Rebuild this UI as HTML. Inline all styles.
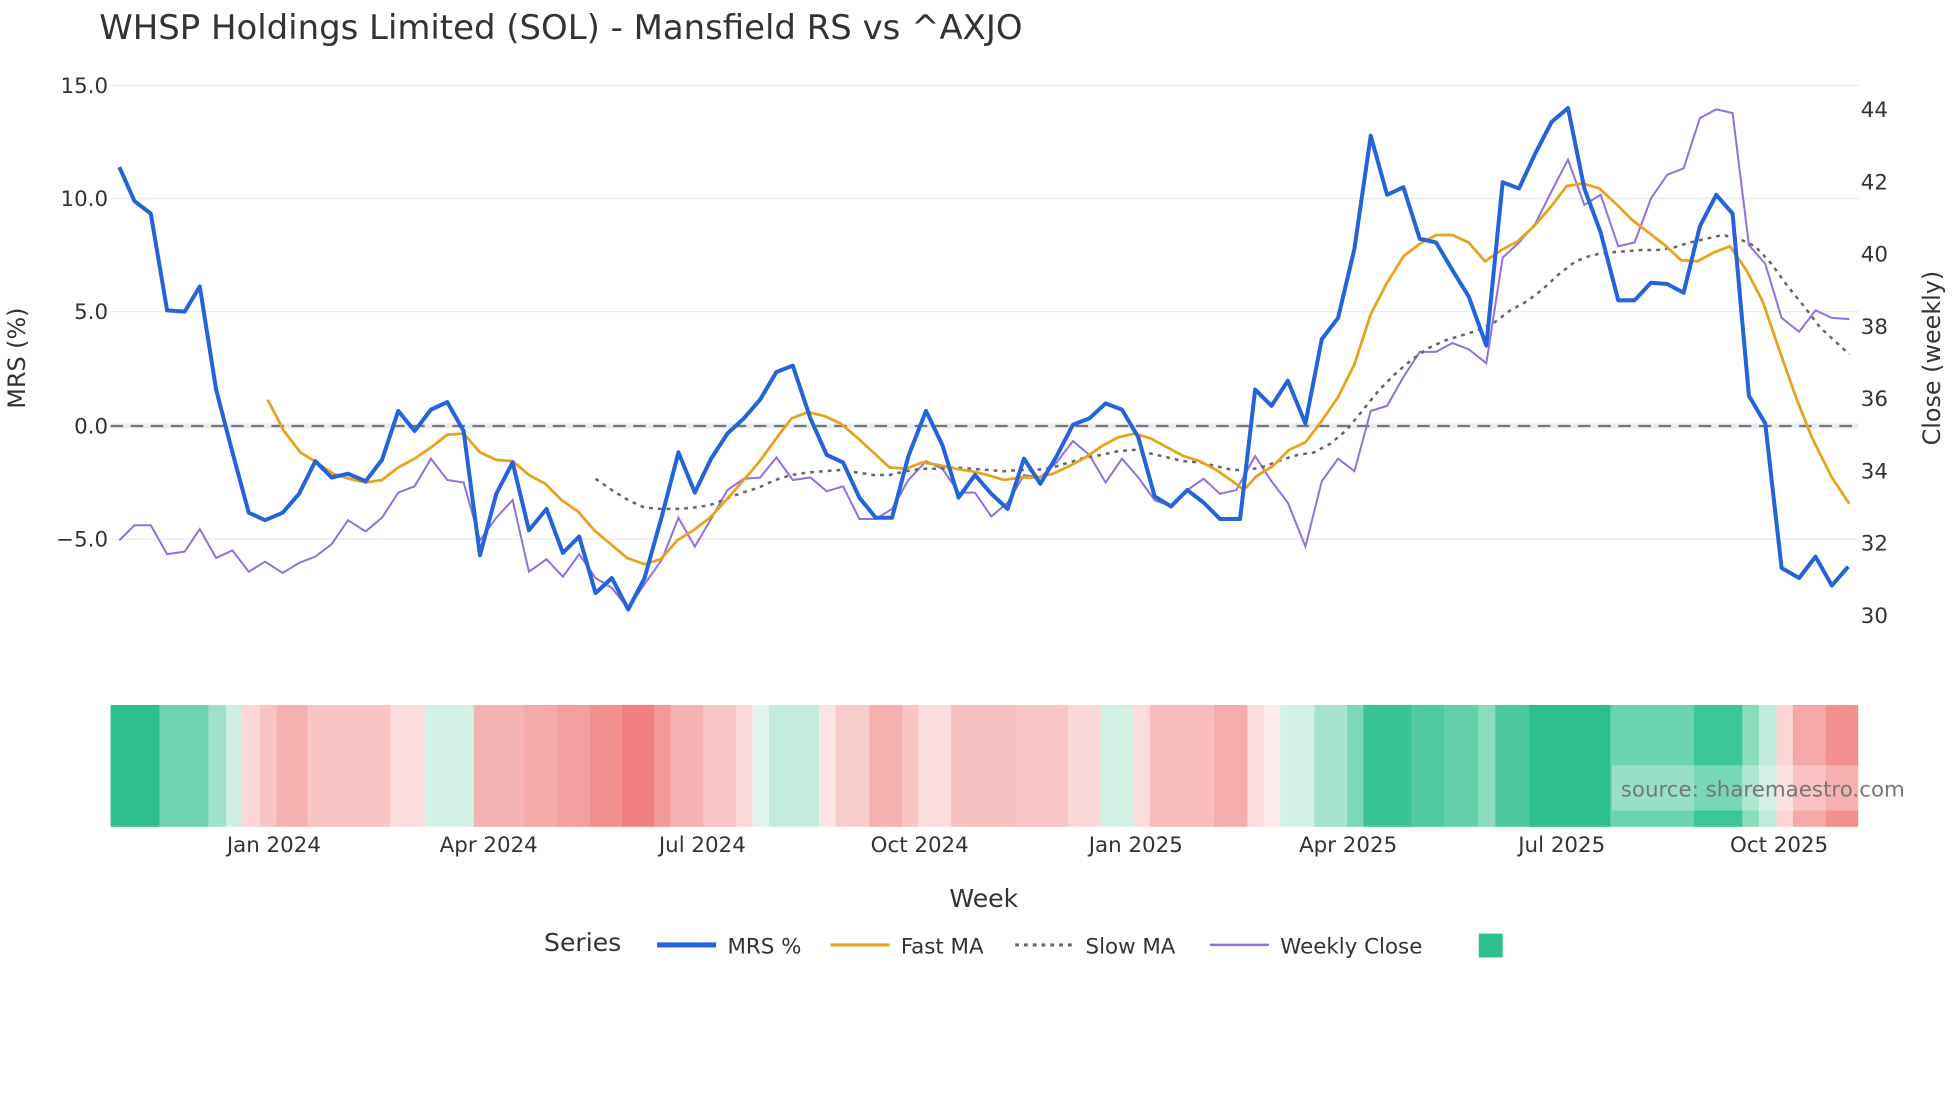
<!DOCTYPE html>
<html><head><meta charset="utf-8"><style>
html,body{margin:0;padding:0;background:#fff;}
svg{display:block;font-family:"DejaVu Sans","Liberation Sans",sans-serif;}
</style></head><body>
<svg width="1960" height="1102" viewBox="0 0 1560 877" preserveAspectRatio="none" xmlns="http://www.w3.org/2000/svg">
<rect width="1560" height="877" fill="#fff"/>
<text x="79" y="31" font-size="27" fill="#333">WHSP Holdings Limited (SOL) - Mansfield RS vs ^AXJO</text>
<g stroke="#e8ecf2" stroke-width="1">
<line x1="88" x2="1479" y1="68" y2="68"/><line x1="88" x2="1479" y1="158" y2="158"/>
<line x1="88" x2="1479" y1="248" y2="248"/><line x1="88" x2="1479" y1="429" y2="429"/>
</g>
<line x1="88" x2="1479" y1="339" y2="339" stroke="#e8ecf6" stroke-width="4"/>
<line x1="88" x2="1479" y1="339" y2="339" stroke="#777" stroke-width="1.8" stroke-dasharray="10,6"/>
<g font-size="17" fill="#333" text-anchor="end">
<text x="86" y="74">15.0</text><text x="86" y="164">10.0</text><text x="86" y="254">5.0</text><text x="86" y="345">0.0</text><text x="86" y="435">−5.0</text>
</g>
<g font-size="17" fill="#333">
<text x="1481" y="93">44</text><text x="1481" y="151">42</text><text x="1481" y="208">40</text><text x="1481" y="266">38</text><text x="1481" y="323">36</text><text x="1481" y="381">34</text><text x="1481" y="438">32</text><text x="1481" y="496">30</text>
</g>
<text transform="translate(20,285) rotate(-90)" font-size="19" fill="#333" text-anchor="middle">MRS (%)</text>
<text transform="translate(1544,285) rotate(-90)" font-size="19" fill="#333" text-anchor="middle">Close (weekly)</text>
<polyline fill="none" stroke="#9370db" stroke-width="1.6" points="95,430 107,418 120,418 133,441 147,439 159,421 172,444 185,438 198,455 211,447 225,456 238,448 251,443 264,433 277,414 291,423 304,412 317,392 330,387 343,365 356,382 369,384 382,430 395,412 408,398 421,455 435,445 448,459 461,441 474,460 487,468 500,484 513,465 527,445 540,412 553,435 566,413 579,390 592,381 605,380 618,364 631,382 645,380 658,391 671,387 684,413 697,413 710,405 723,382 737,367 750,373 763,392 776,392 789,411 802,400 815,378 828,380 841,368 854,351 867,362 880,384 893,365 906,380 919,398 932,403 945,390 958,381 971,393 984,390 999,363 1012,383 1025,400 1039,435 1052,383 1065,365 1078,375 1091,327 1104,323 1117,300 1130,280 1143,280 1156,273 1169,278 1183,289 1196,205 1209,193 1222,178 1235,152 1248,127 1261,163 1274,155 1288,196 1301,193 1314,158 1327,139 1340,134 1353,94 1366,87 1379,90 1392,195 1405,210 1418,253 1432,264 1445,247 1458,253 1472,254"/>
<polyline fill="none" stroke="#666" stroke-width="2" stroke-dasharray="3,4" points="474,381 487,390 500,398 513,404 526,405 539,405 552,404 565,402 578,397 591,392 604,388 617,382 630,378 643,376 656,375 669,374 682,376 695,378 708,378 721,375 734,373 747,373 760,372 773,373 786,374 799,375 812,374 825,374 838,372 851,368 864,364 877,362 890,359 903,358 916,361 929,364 942,367 955,368 968,371 981,374 994,374 1007,371 1020,366 1033,362 1046,360 1059,353 1072,342 1085,326 1098,310 1111,297 1124,286 1137,277 1150,271 1163,267 1176,263 1189,257 1202,247 1215,240 1228,230 1241,218 1254,208 1267,203 1280,201 1293,200 1306,199 1319,199 1332,197 1345,193 1358,190 1371,187 1384,190 1397,196 1410,210 1423,228 1436,244 1449,261 1472,282"/>
<polyline fill="none" stroke="#e8a21c" stroke-width="2.2" points="213,318 226,343 239,360 252,368 265,377 278,381 291,384 304,382 317,372 330,365 343,356 356,346 369,345 382,360 395,366 408,367 421,378 434,385 447,398 460,407 473,422 486,433 499,444 513,449 526,445 539,430 552,422 565,412 578,398 591,383 604,368 617,350 630,333 643,328 656,331 669,337 682,348 695,360 708,372 721,373 734,368 747,370 760,373 773,375 786,378 799,382 812,380 825,380 838,377 851,371 864,364 877,355 890,348 903,345 916,349 929,356 942,363 955,367 968,374 981,383 990,390 1000,379 1013,371 1026,358 1039,352 1052,335 1065,316 1078,290 1091,250 1104,225 1117,204 1130,194 1143,187 1156,187 1169,193 1182,208 1195,199 1208,192 1221,180 1234,165 1247,148 1260,146 1273,150 1286,162 1299,175 1312,185 1325,195 1338,207 1351,208 1364,201 1377,196 1390,215 1403,240 1416,278 1429,315 1442,348 1458,380 1472,401"/>
<polyline fill="none" stroke="#2563d9" stroke-width="3.2" stroke-linejoin="round" points="95,133 107,160 120,170 133,247 147,248 159,228 172,310 185,360 198,408 211,414 225,408 238,393 251,367 264,380 277,377 291,383 304,366 317,327 330,343 343,326 356,320 369,343 382,442 395,393 408,368 421,422 435,405 448,440 461,427 474,472 487,460 500,485 513,460 527,410 540,360 553,392 566,365 579,345 592,333 605,318 618,296 631,291 645,333 658,362 671,368 684,396 697,412 710,412 723,363 737,327 750,354 763,396 776,378 789,393 802,405 815,365 828,385 841,363 854,338 867,333 880,321 893,326 906,348 919,395 932,403 945,390 958,400 971,413 987,413 999,310 1012,323 1025,303 1039,337 1052,270 1065,253 1078,198 1091,108 1104,155 1117,149 1130,190 1143,193 1156,215 1169,236 1183,275 1196,145 1209,150 1222,122 1235,97 1248,86 1261,150 1274,185 1288,239 1301,239 1314,225 1327,226 1340,233 1353,180 1366,155 1379,170 1392,315 1405,337 1418,452 1432,460 1445,443 1458,466 1471,451"/>
<g>
<rect x="88" y="561" width="39" height="97" fill="#2ec08f"/>
<rect x="127" y="561" width="39" height="97" fill="#6fd3b0"/>
<rect x="166" y="561" width="14" height="97" fill="#a0e0c8"/>
<rect x="180" y="561" width="12" height="97" fill="#cfeee2"/>
<rect x="192" y="561" width="15" height="97" fill="#fbd7d7"/>
<rect x="207" y="561" width="13" height="97" fill="#f9c3c3"/>
<rect x="220" y="561" width="25" height="97" fill="#f5b0b0"/>
<rect x="245" y="561" width="66" height="97" fill="#f8c4c4"/>
<rect x="311" y="561" width="27" height="97" fill="#fbdcdc"/>
<rect x="338" y="561" width="39" height="97" fill="#d4f1e6"/>
<rect x="377" y="561" width="39" height="97" fill="#f5b4b4"/>
<rect x="416" y="561" width="27" height="97" fill="#f6abab"/>
<rect x="443" y="561" width="26" height="97" fill="#f49f9f"/>
<rect x="469" y="561" width="26" height="97" fill="#f28f8f"/>
<rect x="495" y="561" width="26" height="97" fill="#f28080"/>
<rect x="521" y="561" width="13" height="97" fill="#f39999"/>
<rect x="534" y="561" width="26" height="97" fill="#f6b3b3"/>
<rect x="560" y="561" width="26" height="97" fill="#f8c6c6"/>
<rect x="586" y="561" width="13" height="97" fill="#fbd9d9"/>
<rect x="599" y="561" width="13" height="97" fill="#e0f4ec"/>
<rect x="612" y="561" width="40" height="97" fill="#c4ecdc"/>
<rect x="652" y="561" width="13" height="97" fill="#fde4e4"/>
<rect x="665" y="561" width="27" height="97" fill="#f9cccc"/>
<rect x="692" y="561" width="26" height="97" fill="#f6b0b0"/>
<rect x="718" y="561" width="13" height="97" fill="#f9c4c4"/>
<rect x="731" y="561" width="26" height="97" fill="#fbdcdc"/>
<rect x="757" y="561" width="53" height="97" fill="#f8c1c1"/>
<rect x="810" y="561" width="40" height="97" fill="#f8c6c6"/>
<rect x="850" y="561" width="26" height="97" fill="#fbd8d8"/>
<rect x="876" y="561" width="26" height="97" fill="#d3f1e5"/>
<rect x="902" y="561" width="13" height="97" fill="#fadcdc"/>
<rect x="915" y="561" width="51" height="97" fill="#f8bcbc"/>
<rect x="966" y="561" width="27" height="97" fill="#f5acac"/>
<rect x="993" y="561" width="13" height="97" fill="#fbdcdc"/>
<rect x="1006" y="561" width="13" height="97" fill="#fdeaea"/>
<rect x="1019" y="561" width="27" height="97" fill="#d3f1e5"/>
<rect x="1046" y="561" width="26" height="97" fill="#a7e3cd"/>
<rect x="1072" y="561" width="13" height="97" fill="#7ed8b8"/>
<rect x="1085" y="561" width="39" height="97" fill="#3ac494"/>
<rect x="1124" y="561" width="26" height="97" fill="#4fca9f"/>
<rect x="1150" y="561" width="27" height="97" fill="#62cfa9"/>
<rect x="1177" y="561" width="13" height="97" fill="#8adcbd"/>
<rect x="1190" y="561" width="27" height="97" fill="#4dc9a0"/>
<rect x="1217" y="561" width="65" height="97" fill="#2ebf8e"/>
<rect x="1282" y="561" width="66" height="97" fill="#6bd3ae"/>
<rect x="1348" y="561" width="39" height="97" fill="#3ec796"/>
<rect x="1387" y="561" width="13" height="97" fill="#8adcbd"/>
<rect x="1400" y="561" width="14" height="97" fill="#c0ead9"/>
<rect x="1414" y="561" width="13" height="97" fill="#fbd4d4"/>
<rect x="1427" y="561" width="26" height="97" fill="#f6a7a7"/>
<rect x="1453" y="561" width="26" height="97" fill="#f28f8f"/>
</g>
<rect x="1283" y="609" width="262" height="36" fill="#fff" fill-opacity="0.3"/>
<text x="1290" y="634" font-size="17" fill="#777">source: sharemaestro.com</text>
<g font-size="17" fill="#333" text-anchor="middle">
<text x="218" y="678">Jan 2024</text><text x="389" y="678">Apr 2024</text><text x="559" y="678">Jul 2024</text><text x="732" y="678">Oct 2024</text><text x="904" y="678">Jan 2025</text><text x="1073" y="678">Apr 2025</text><text x="1243" y="678">Jul 2025</text><text x="1416" y="678">Oct 2025</text>
</g>
<text x="783" y="722" font-size="20" fill="#333" text-anchor="middle">Week</text>
<text x="433" y="757" font-size="20" fill="#333">Series</text>
<line x1="523" x2="570" y1="752" y2="752" stroke="#2563d9" stroke-width="4"/>
<text x="579" y="759" font-size="17" fill="#333">MRS %</text>
<line x1="661" x2="708" y1="752" y2="752" stroke="#e8a21c" stroke-width="2.5"/>
<text x="717" y="759" font-size="17" fill="#333">Fast MA</text>
<line x1="808" x2="855" y1="752" y2="752" stroke="#666" stroke-width="2.5" stroke-dasharray="3,4"/>
<text x="864" y="759" font-size="17" fill="#333">Slow MA</text>
<line x1="963" x2="1010" y1="752" y2="752" stroke="#9370db" stroke-width="2"/>
<text x="1019" y="759" font-size="17" fill="#333">Weekly Close</text>
<rect x="1177" y="743" width="19" height="19" fill="#2ec08f"/>
</svg>
</body></html>
